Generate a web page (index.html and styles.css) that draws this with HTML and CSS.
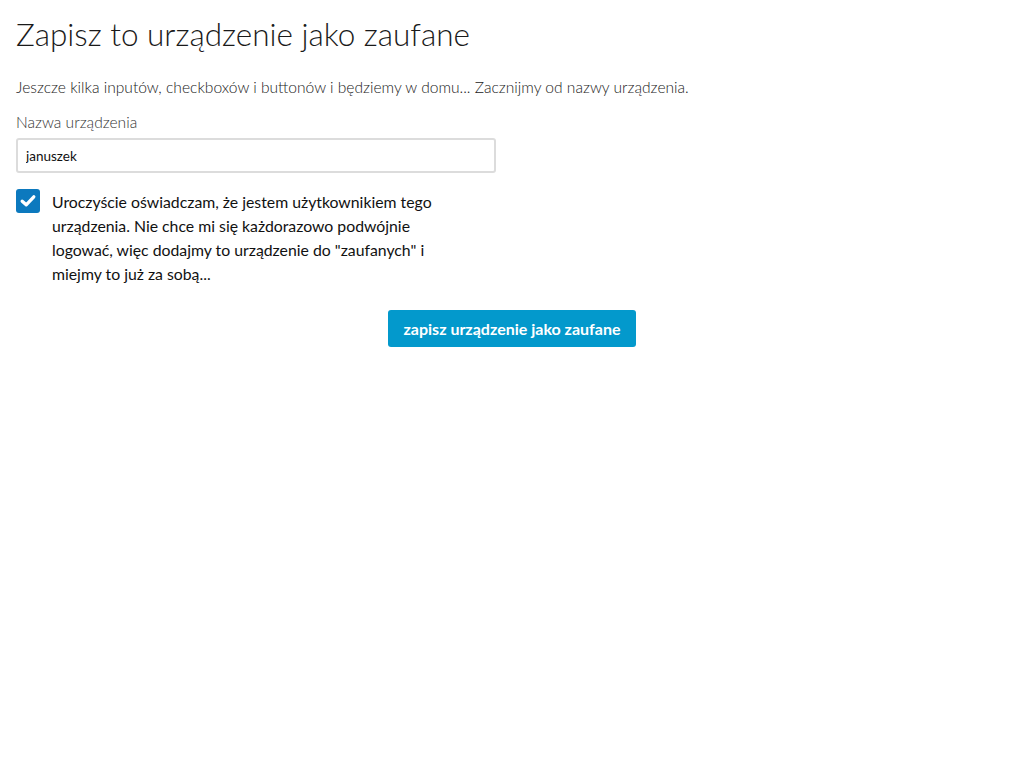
FILE: index.html
```html
<!DOCTYPE html>
<html lang="pl">
<head>
<meta charset="utf-8">
<link rel="stylesheet" href="styles.css">
</head>
<body>
<main class="page">
  <h1 class="title">Zapisz to urządzenie jako zaufane</h1>
  <p class="intro">Jeszcze kilka inputów, checkboxów i buttonów i będziemy w domu... Zacznijmy od nazwy urządzenia.</p>
  <label class="field-label" for="name">Nazwa urządzenia</label>
  <input class="field-input" id="name" type="text" value="januszek">
  <div class="check-row">
    <span class="checkbox">
      <svg width="24" height="24" viewBox="0 0 24 24"><path d="M6.2 12.2 L10.2 15.8 L17.8 7.8" fill="none" stroke="#fff" stroke-width="3.3" stroke-linecap="round" stroke-linejoin="round"/></svg>
    </span>
    <span class="check-text">Uroczyście oświadczam, że jestem użytkownikiem tego urządzenia. Nie chce mi się każdorazowo podwójnie logować, więc dodajmy to urządzenie do "zaufanych" i miejmy to już za sobą...</span>
  </div>
  <div class="actions">
    <button class="btn" type="button">zapisz urządzenie jako zaufane</button>
  </div>
</main>
</body>
</html>
```
FILE: styles.css
```css
html, body {
  margin: 0;
  padding: 0;
  background: #fff;
}
body {
  font-family: Lato, "Open Sans", sans-serif;
  color: #222;
}
.page {
  padding: 0 16px;
  display: flex;
  flex-direction: column;
}
.title {
  margin: 14px 0 0;
  font-size: 31.5px;
  font-weight: 300;
  line-height: 40px;
  color: #1a1a1a;
}
.intro {
  margin: 23px 0 0;
  font-size: 15.6px;
  font-weight: 300;
  line-height: 20px;
  color: #222;
}
.field-label {
  margin-top: 15px;
  font-size: 15.6px;
  font-weight: 300;
  line-height: 20px;
  color: #333;
}
.field-input {
  margin-top: 6px;
  box-sizing: border-box;
  width: 480px;
  height: 35px;
  border: 2px solid #dcdcdc;
  border-radius: 3px;
  padding: 0 8px;
  font-family: Lato, sans-serif;
  font-size: 13.5px;
  color: #111;
  outline: none;
}
.check-row {
  margin-top: 16px;
  display: flex;
  gap: 12px;
  align-items: flex-start;
}
.checkbox {
  flex: none;
  width: 24px;
  height: 24px;
  border-radius: 3px;
  background: #0c79be;
  display: flex;
}
.check-text {
  width: 395px;
  font-size: 15.8px;
  line-height: 24px;
  color: #111;
  margin-top: 1px;
}
.actions {
  margin-top: 24px;
  display: flex;
  justify-content: center;
}
.btn {
  width: 248px;
  height: 37px;
  border: none;
  border-radius: 3px;
  background: #0399cc;
  color: #fff;
  font-family: Lato, sans-serif;
  font-weight: 700;
  font-size: 16px;
  padding: 0;
}
```
